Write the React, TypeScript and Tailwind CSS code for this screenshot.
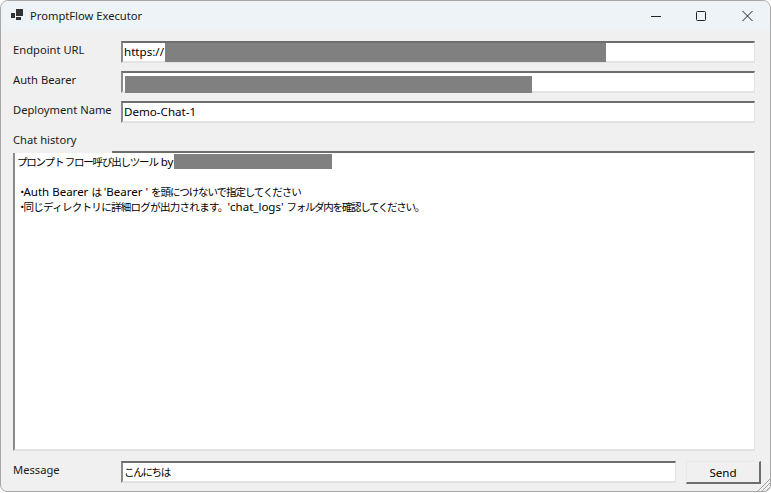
const font = { fontFamily: '"Noto Sans", "Noto Sans CJK JP", sans-serif' };

function Field({ label, children }: { label: string; children: React.ReactNode }) {
  return (
    <div className="flex h-[22px] items-start">
      <div className="mt-[1px] w-[108px] shrink-0 text-[11.2px] leading-[16px] text-[#1a1a1a] whitespace-nowrap">{label}</div>
      {children}
    </div>
  );
}

function Box({ children, className = "" }: { children?: React.ReactNode; className?: string }) {
  return (
    <div className={"flex h-[22px] min-w-0 shrink-0 items-center whitespace-nowrap border-t-2 border-l-2 border-r border-b-2 border-t-[#6d6d6d] border-l-[#8a8a8a] border-r-[#e3e3e3] border-b-[#e3e3e3] bg-white pl-px text-[11.6px] leading-[16px] text-black " + className}>
      {children}
    </div>
  );
}

function Mask({ className }: { className: string }) {
  return <span className={"block shrink-0 bg-[#808080] " + className} />;
}

function J({ children, className = "tracking-[-1.1px]" }: { children: React.ReactNode; className?: string }) {
  return <span className={"text-[10.5px] " + className}>{children}</span>;
}

export default function App() {
  return (
    <div style={font} className="h-[493px] w-[771px] overflow-hidden bg-white">
      <div className="relative flex h-[492px] w-[771px] flex-col overflow-hidden rounded-t-[8px] rounded-b-[7px] border border-[#a8a8a8] bg-[#f0f0f0]">
        <div className="flex h-[30px] shrink-0 items-center bg-[#edf3f7] pl-[10px]">
          <svg width="14" height="14" viewBox="0 0 14 14" className="mr-[5px]" fill="#333">
            <rect x="0" y="4" width="4" height="5" />
            <rect x="5" y="0" width="7" height="7" />
            <rect x="5" y="8" width="5" height="3" />
          </svg>
          <span className="text-[11.2px] leading-[16px] text-[#1a1a1a]">PromptFlow Executor</span>
          <div className="ml-auto flex items-center">
            <svg width="46" height="30" viewBox="0 0 46 30" fill="none" stroke="#222" strokeWidth="1"><path d="M19 15.5H29" /></svg>
            <svg width="46" height="30" viewBox="0 0 46 30" fill="none" stroke="#222" strokeWidth="1"><rect x="18.5" y="10.5" width="9" height="9" rx="1" /></svg>
            <svg width="46" height="30" viewBox="0 0 46 30" fill="none" stroke="#222" strokeWidth="1"><path d="M18.5 10L28.5 20M28.5 10L18.5 20" /></svg>
          </div>
        </div>

        <div className="flex min-h-0 flex-1 flex-col pl-[12px] pr-[15px] pt-[10px]">
          <div className="flex flex-col gap-[8px]">
            <Field label="Endpoint URL">
              <Box className="flex-1"><span>https://</span><Mask className="-mb-px ml-px h-[19px] w-[441px] self-start" /></Box>
            </Field>
            <Field label="Auth Bearer">
              <Box className="flex-1"><Mask className="ml-[1px] mt-[3px] h-[17px] w-[407px] self-start" /></Box>
            </Field>
            <Field label="Deployment Name">
              <Box className="flex-1">Demo-Chat-1</Box>
            </Field>
          </div>

          <div className="relative z-10 mt-[10px] h-[20px] w-[99px] bg-[#f0f0f0] text-[11.2px] leading-[14px] text-[#1a1a1a]">Chat history</div>
          <div className="-mt-[2px] h-[300px] shrink-0 overflow-hidden border-t-2 border-l-2 border-r border-b-2 border-t-[#6d6d6d] border-l-[#8a8a8a] border-r-[#e3e3e3] border-b-[#e3e3e3] bg-white pl-[2px] pt-[1px] text-[11.5px] leading-[15px] text-black">
            <div className="flex h-[15px] items-center whitespace-nowrap">
              <span><J className="tracking-[-1.2px]">プロンプト フロー呼び出しツール</J> by</span><Mask className="ml-px h-[15px] w-[158px]" />
            </div>
            <div className="h-[15px]" />
            <div className="h-[15px] whitespace-nowrap"><J className="tracking-[-4px]">・</J>Auth Bearer <J>は</J> 'Bearer ' <J>を頭につけないで指定してください</J></div>
            <div className="h-[15px] whitespace-nowrap"><J className="tracking-[-4px]">・</J><J className="tracking-[-0.7px]">同じディレクトリに詳細ログが出力されます。</J>'chat_logs' <J className="tracking-[-1.3px]">フォルダ内を確認してください。</J></div>
          </div>

          <div className="-mr-[6px] mt-[10px] flex items-start">
            <div className="mt-[1px] w-[108px] shrink-0 text-[11.2px] leading-[16px] text-[#1a1a1a]">Message</div>
            <Box className="w-[555px]"><J className="tracking-[-1.3px]">こんにちは</J></Box>
            <button className="ml-[10px] h-[23px] w-[75px] shrink-0 border-t border-l border-r-2 border-b-2 border-t-[#e8e8e8] border-l-[#e8e8e8] border-r-[#6d6d6d] border-b-[#6d6d6d] bg-[#f0f0f0] pt-px text-[11.6px] leading-[16px] text-black">Send</button>
          </div>
        </div>

        <svg width="13" height="13" viewBox="0 0 13 13" className="absolute bottom-0 right-0" stroke="#a0a0a0" strokeWidth="1">
          <path d="M13 1L1 13M13 5L5 13M13 9L9 13" />
        </svg>
      </div>
    </div>
  );
}
